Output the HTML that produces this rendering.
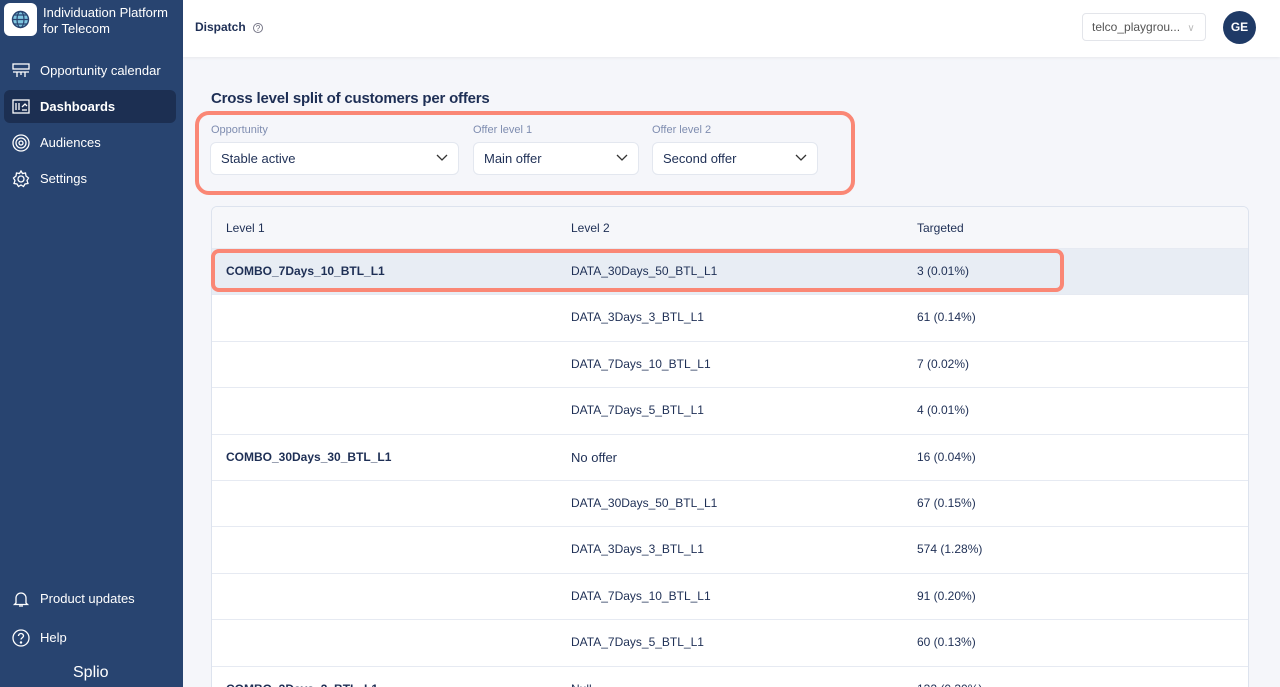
<!DOCTYPE html>
<html style="width:1280px;height:687px;overflow:hidden"><head><meta charset="utf-8"><style>
*{box-sizing:border-box;margin:0;padding:0}
body{width:1280px;height:687px;overflow:hidden;font-family:"Liberation Sans",sans-serif;background:#f5f6fa;position:relative;color:#1e2f55}
.sb{position:absolute;left:0;top:0;width:183px;height:687px;background:#284470;color:#fff}
.logo{position:absolute;left:4px;top:3px;width:33px;height:33px;background:#fff;border-radius:6px}
.brand{position:absolute;left:43px;top:5px;font-size:13px;line-height:16px;font-weight:500}
.nav{position:absolute;left:4px;width:172px;height:33px;border-radius:6px;font-size:13px;font-weight:bold;line-height:33px;padding-left:36px}
.nav svg{position:absolute;left:8px;top:8px}
.act{background:#1c2f52}
.hd{position:absolute;left:183px;top:0;right:0;height:57px;background:#fff;box-shadow:0 1px 3px rgba(0,0,0,.06)}
.t{position:absolute;white-space:nowrap}
.sel{position:absolute;top:142px;height:33px;background:#fff;border:1px solid #e3e7ef;border-radius:6px;font-size:13px;line-height:31px;padding-left:10px}
.sel svg{position:absolute;right:10px;top:11px}
.lab{position:absolute;top:124px;font-size:11px;color:#7f8db0}
.tbl{position:absolute;left:211px;top:206px;width:1038px;height:490px;background:#fff;border:1px solid #dde3ee;border-radius:6px;overflow:hidden}
.row{position:absolute;left:0;width:100%;height:46.4px;border-top:1px solid #e6eaf2;font-size:12px}
.row span{position:absolute;top:15px}
.c1{left:14px;font-weight:bold}.c2{left:359px}.c3{left:705px}
.box{position:absolute;border:4px solid #fa8775}
</style></head><body>
<div class="sb">
<div class="logo"><svg width="33" height="33" viewBox="0 0 33 33"><circle cx="16.5" cy="16.5" r="8" fill="#7fc6e0" stroke="#284470" stroke-width="1.4"/><ellipse cx="16.5" cy="16.5" rx="3.5" ry="8" fill="none" stroke="#284470" stroke-width="1.2"/><path d="M8.5 16.5h16M10 12h13M10 21h13" stroke="#284470" stroke-width="1.2"/></svg></div>
<div class="brand">Individuation Platform<br>for Telecom</div>
<div class="nav" style="top:54px;font-weight:500"><svg width="18" height="18" viewBox="0 0 18 18" fill="none" stroke="#fff" stroke-width="1.3"><rect x="1" y="2" width="16" height="5"/><path d="M1 10h16M5 10v5M9 10v3M13 10v5"/></svg>Opportunity calendar</div>
<div class="nav act" style="top:90px"><svg width="18" height="18" viewBox="0 0 18 18" fill="none" stroke="#fff" stroke-width="1.3"><rect x="1" y="2" width="16" height="13"/><path d="M4 5v7M7 5v7M10 9l3-3 2 2M10 12h5"/></svg>Dashboards</div>
<div class="nav" style="top:126px;font-weight:500"><svg width="18" height="18" viewBox="0 0 18 18" fill="none" stroke="#fff" stroke-width="1.3"><circle cx="9" cy="9" r="8"/><circle cx="9" cy="9" r="5"/><circle cx="9" cy="9" r="2"/></svg>Audiences</div>
<div class="nav" style="top:162px;font-weight:500"><svg width="18" height="18" viewBox="0 0 18 18" fill="none" stroke="#fff" stroke-width="1.3"><circle cx="9" cy="9" r="3"/><path d="M9 1l1.5 2.5 3-.5.5 3L16.5 8 15 10.5l1 3-3 .5-1.5 2.5L9 15l-2.5 1.5L5 14l-3-.5 1-3L1.5 8 4 6l.5-3 3 .5z"/></svg>Settings</div>
<div class="nav" style="top:582px;font-weight:500"><svg width="18" height="18" viewBox="0 0 18 18" fill="none" stroke="#fff" stroke-width="1.3"><path d="M4 13V8a5 5 0 0110 0v5l1.5 1.5h-13zM7 16h4"/></svg>Product updates</div>
<div class="nav" style="top:621px;font-weight:500"><svg width="18" height="18" viewBox="0 0 18 18" fill="none" stroke="#fff" stroke-width="1.3"><circle cx="9" cy="9" r="8"/><path d="M6.5 7a2.5 2.5 0 115 0c0 1.5-2.5 2-2.5 3.5"/><circle cx="9" cy="13.5" r=".6" fill="#fff"/></svg>Help</div>
<div class="t" style="left:73px;top:664px;font-size:16px">Splio</div>
</div>
<div class="hd">
<div class="t" style="left:12px;top:20px;font-size:12px;font-weight:bold">Dispatch <span style="font-weight:normal;color:#667;border:1px solid #778;border-radius:50%;display:inline-block;width:10px;height:10px;line-height:9px;text-align:center;font-size:8px;margin-left:4px">?</span></div>
<div style="position:absolute;left:899px;top:13px;width:124px;height:28px;border:1px solid #e3e5ea;border-radius:4px;font-size:12px;color:#555;line-height:26px;padding-left:9px">telco_playgrou... <span style="color:#bbb;font-size:10px;margin-left:4px">&#8744;</span></div>
<div style="position:absolute;left:1040px;top:11px;width:33px;height:33px;border-radius:50%;background:#1f3a66;color:#fff;font-size:12px;font-weight:bold;text-align:center;line-height:33px">GE</div>
</div>
<div class="t" style="left:211px;top:90px;font-size:15px;font-weight:bold;letter-spacing:-0.2px">Cross level split of customers per offers</div>
<div class="box" style="left:195px;top:111px;width:660px;height:84px;border-radius:14px"></div>
<div class="lab" style="left:211px">Opportunity</div>
<div class="lab" style="left:473px">Offer level 1</div>
<div class="lab" style="left:652px">Offer level 2</div>
<div class="sel" style="left:210px;width:249px">Stable active<svg width="12" height="8" viewBox="0 0 12 8"><path d="M1 1l5 5 5-5" fill="none" stroke="#333" stroke-width="1.3"/></svg></div>
<div class="sel" style="left:473px;width:166px">Main offer<svg width="12" height="8" viewBox="0 0 12 8"><path d="M1 1l5 5 5-5" fill="none" stroke="#333" stroke-width="1.3"/></svg></div>
<div class="sel" style="left:652px;width:166px">Second offer<svg width="12" height="8" viewBox="0 0 12 8"><path d="M1 1l5 5 5-5" fill="none" stroke="#333" stroke-width="1.3"/></svg></div>
<div class="tbl">
<div class="row" style="top:0;border-top:none;background:#f6f7fa;height:41px"><span class="c1" style="font-weight:normal;top:14px">Level 1</span><span class="c2" style="top:14px">Level 2</span><span class="c3" style="top:14px">Targeted</span></div>
<div class="row" style="top:41px;background:#e8edf4"><span class="c1">COMBO_7Days_10_BTL_L1</span><span class="c2">DATA_30Days_50_BTL_L1</span><span class="c3">3 (0.01%)</span></div>
<div class="row" style="top:87.4px"><span class="c2">DATA_3Days_3_BTL_L1</span><span class="c3">61 (0.14%)</span></div>
<div class="row" style="top:133.8px"><span class="c2">DATA_7Days_10_BTL_L1</span><span class="c3">7 (0.02%)</span></div>
<div class="row" style="top:180.2px"><span class="c2">DATA_7Days_5_BTL_L1</span><span class="c3">4 (0.01%)</span></div>
<div class="row" style="top:226.6px"><span class="c1">COMBO_30Days_30_BTL_L1</span><span class="c2" style="font-size:13px">No offer</span><span class="c3">16 (0.04%)</span></div>
<div class="row" style="top:273px"><span class="c2">DATA_30Days_50_BTL_L1</span><span class="c3">67 (0.15%)</span></div>
<div class="row" style="top:319.4px"><span class="c2">DATA_3Days_3_BTL_L1</span><span class="c3">574 (1.28%)</span></div>
<div class="row" style="top:365.8px"><span class="c2">DATA_7Days_10_BTL_L1</span><span class="c3">91 (0.20%)</span></div>
<div class="row" style="top:412.2px"><span class="c2">DATA_7Days_5_BTL_L1</span><span class="c3">60 (0.13%)</span></div>
<div class="row" style="top:458.6px"><span class="c1">COMBO_3Days_3_BTL_L1</span><span class="c2">Null</span><span class="c3">132 (0.30%)</span></div>
</div>
<div class="box" style="left:211px;top:249px;width:853px;height:43px;border-radius:8px"></div>
</body></html>
